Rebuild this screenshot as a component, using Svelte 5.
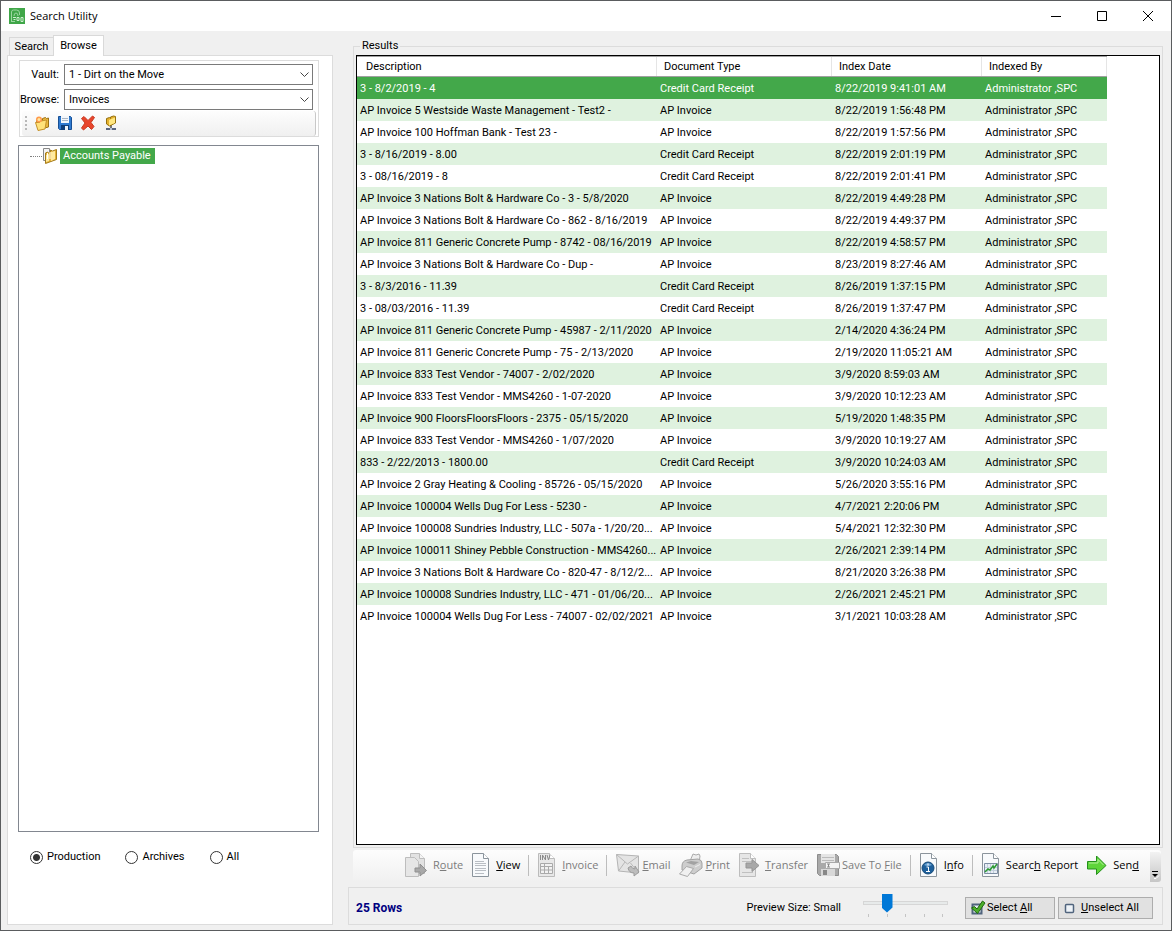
<script>
  const A = 'AP Invoice', C = 'Credit Card Receipt';
  const rows = [
    ['3 - 8/2/2019 - 4', C, '8/22/2019 9:41:01 AM'],
    ['AP Invoice 5 Westside Waste Management - Test2 -', A, '8/22/2019 1:56:48 PM'],
    ['AP Invoice 100 Hoffman Bank - Test 23 -', A, '8/22/2019 1:57:56 PM'],
    ['3 - 8/16/2019 - 8.00', C, '8/22/2019 2:01:19 PM'],
    ['3 - 08/16/2019 - 8', C, '8/22/2019 2:01:41 PM'],
    ['AP Invoice 3 Nations Bolt & Hardware Co - 3 - 5/8/2020', A, '8/22/2019 4:49:28 PM'],
    ['AP Invoice 3 Nations Bolt & Hardware Co - 862 - 8/16/2019', A, '8/22/2019 4:49:37 PM'],
    ['AP Invoice 811 Generic Concrete Pump - 8742 - 08/16/2019', A, '8/22/2019 4:58:57 PM'],
    ['AP Invoice 3 Nations Bolt & Hardware Co - Dup -', A, '8/23/2019 8:27:46 AM'],
    ['3 - 8/3/2016 - 11.39', C, '8/26/2019 1:37:15 PM'],
    ['3 - 08/03/2016 - 11.39', C, '8/26/2019 1:37:47 PM'],
    ['AP Invoice 811 Generic Concrete Pump - 45987 - 2/11/2020', A, '2/14/2020 4:36:24 PM'],
    ['AP Invoice 811 Generic Concrete Pump - 75 - 2/13/2020', A, '2/19/2020 11:05:21 AM'],
    ['AP Invoice 833 Test Vendor - 74007 - 2/02/2020', A, '3/9/2020 8:59:03 AM'],
    ['AP Invoice 833 Test Vendor - MMS4260 - 1-07-2020', A, '3/9/2020 10:12:23 AM'],
    ['AP Invoice 900 FloorsFloorsFloors - 2375 - 05/15/2020', A, '5/19/2020 1:48:35 PM'],
    ['AP Invoice 833 Test Vendor - MMS4260 - 1/07/2020', A, '3/9/2020 10:19:27 AM'],
    ['833 - 2/22/2013 - 1800.00', C, '3/9/2020 10:24:03 AM'],
    ['AP Invoice 2 Gray Heating & Cooling - 85726 - 05/15/2020', A, '5/26/2020 3:55:16 PM'],
    ['AP Invoice 100004 Wells Dug For Less - 5230 -', A, '4/7/2021 2:20:06 PM'],
    ['AP Invoice 100008 Sundries Industry, LLC - 507a - 1/20/20...', A, '5/4/2021 12:32:30 PM'],
    ['AP Invoice 100011 Shiney Pebble Construction - MMS4260...', A, '2/26/2021 2:39:14 PM'],
    ['AP Invoice 3 Nations Bolt & Hardware Co - 820-47 - 8/12/2...', A, '8/21/2020 3:26:38 PM'],
    ['AP Invoice 100008 Sundries Industry, LLC - 471 - 01/06/20...', A, '2/26/2021 2:45:21 PM'],
    ['AP Invoice 100004 Wells Dug For Less - 74007 - 02/02/2021', A, '3/1/2021 10:03:28 AM']
  ];
  let selected = $state(0);
  let scope = $state('Production');
  let preview = $state(1);
</script>

{#snippet page(fill, stroke)}
  <path d="M1.5.5h11l5 5v18h-16z" fill={fill} stroke={stroke} />
  <path d="M12.5.5v5h5" fill="#fff" stroke={stroke} />
{/snippet}

<div class="window">
  <header class="titlebar">
    <svg width="16" height="16" viewBox="0 0 16 16">
      <rect width="16" height="16" fill="#3fa648" />
      <path d="M2.500 14V4q0-2 2-2h3q3 0 3 3v2M5 8q0-3 2-3t2 3M3 13.500h3" fill="none" stroke="#9bd6a0" />
      <path d="M4 9.500h3M4.500 11.500h2M8 9.500h2v3H8zM12 9.500h2v4h-2z" fill="none" stroke="#cdeecf" />
    </svg>
    <h1>Search Utility</h1>
    <div class="winbtns">
      <button aria-label="Minimize"><svg width="10" height="10"><path d="M0 5.500h10" stroke="#000" /></svg></button>
      <button aria-label="Maximize"><svg width="10" height="10"><path d="M.5.5h9v9h-9z" fill="none" stroke="#000" /></svg></button>
      <button aria-label="Close"><svg width="10" height="10"><path d="M0 0l10 10M10 0L0 10" stroke="#000" /></svg></button>
    </div>
  </header>

  <div class="body">
    <aside>
      <div class="tabs" role="tablist">
        <button role="tab" aria-selected="false">Search</button>
        <button role="tab" aria-selected="true" class="on">Browse</button>
      </div>
      <div class="panel">
        <div class="filters">
          <div class="field">
            <label for="vault">Vault:</label>
            <div class="combo">
              <select id="vault"><option>1 - Dirt on the Move</option></select>
              <svg width="9" height="6"><path d="M.5.5l4 4 4-4" fill="none" stroke="#444" /></svg>
            </div>
          </div>
          <div class="field">
            <label for="browse">Browse:</label>
            <div class="combo">
              <select id="browse"><option>Invoices</option></select>
              <svg width="9" height="6"><path d="M.5.5l4 4 4-4" fill="none" stroke="#444" /></svg>
            </div>
          </div>
          <div class="strip">
            <span class="grip"></span>
            <button aria-label="New folder"><svg width="16" height="16" viewBox="0 0 16 16">
              <path d="M2.500 5.500l5-1 1 1V3.500l3-1 1 1 2-.5v9l-10 2.500z" fill="#e9b63c" stroke="#9b7216" />
              <path d="M1.500 7.500h4l1.500-1.500 5.500-1-1.500 9-7 1.500z" fill="#ffe27a" stroke="#c4912a" />
              <circle cx="5" cy="4.500" r="3" fill="#ff9a4a" /><circle cx="5" cy="4.500" r="1.500" fill="#ffe6a0" />
            </svg></button>
            <button aria-label="Save"><svg width="16" height="16" viewBox="0 0 16 16">
              <path d="M1.500 1.500h12l1 1v12h-12l-1-1z" fill="#2f7ad0" stroke="#174f94" />
              <path d="M4 1h8v7H4z" fill="#f3f7fb" /><path d="M5 3.500h6M5 5.500h6" stroke="#a9b6c6" />
              <path d="M4 10h8v5H4z" fill="#103e78" /><path d="M8 11h3v4H8z" fill="#eef3f8" />
            </svg></button>
            <button aria-label="Delete"><svg width="16" height="16" viewBox="0 0 16 16">
              <path d="M1.500 3.500l2.500-2 4 4 4.500-4.500 2 1.500L11 7.500l3 4-2.500 3L8 11l-4.500 4-2-2L5 8z" fill="#e8452c" stroke="#c93a22" />
            </svg></button>
            <button aria-label="Shared folder"><svg width="16" height="16" viewBox="0 0 16 16">
              <path d="M8 10v4" stroke="#777" stroke-width="2" />
              <path d="M3.500 3.500l3-1 1 1V2l3-1 2 .5v6.500l-6 3-3-2z" fill="#e5b12e" stroke="#94700f" />
              <path d="M6 5l6-2.500V8l-6 2.500z" fill="#ffe780" />
              <path d="M3 14h10" stroke="#59657f" stroke-width="2" /><path d="M7 14h2" stroke="#b9c2d6" stroke-width="2" />
            </svg></button>
          </div>
        </div>

        <div class="tree" role="tree">
          <div class="node" role="treeitem" aria-selected="true">
            <span class="dots"></span>
            <svg width="16" height="16" viewBox="0 0 16 16">
              <path d="M1.500.5h6v12h-6z" fill="#f4f4f4" stroke="#888" />
              <path d="M3.500 5l2-1 1 1 2-1v-2l2 1 4-1.500v10l-11 4z" fill="#e6b335" stroke="#a57c1c" />
              <path d="M4 7l3-1v7l-3 1zM9 4l4-1v8l-4 2z" fill="#ffeaa0" /><path d="M5.500 5v6M8 4v7" stroke="#fff" />
            </svg>
            <span class="nodetext">Accounts Payable</span>
          </div>
        </div>

        <div class="radios">
          {#each ['Production', 'Archives', 'All'] as s}
            <label><input type="radio" name="scope" value={s} bind:group={scope} />{s}</label>
          {/each}
        </div>
      </div>
    </aside>

    <main>
      <fieldset>
        <legend>Results</legend>
        <div class="list">
          <table>
            <colgroup><col class="c1" /><col class="c2" /><col class="c3" /><col class="c4" /></colgroup>
            <thead>
              <tr><th>Description</th><th>Document Type</th><th>Index Date</th><th>Indexed By</th></tr>
            </thead>
            <tbody>
              {#each rows as r, i}
                <tr class:sel={selected === i} onclick={() => (selected = i)}>
                  <td>{r[0]}</td><td>{r[1]}</td><td>{r[2]}</td><td>Administrator ,SPC</td>
                </tr>
              {/each}
            </tbody>
          </table>
        </div>
      </fieldset>

      <div class="toolbar">
        <div class="tools">
          <button disabled><svg width="24" height="24" viewBox="0 0 24 24">
            <path d="M6.500.5h9l5 5v15h-14z" fill="#e2e2e2" stroke="#bdbdbd" /><path d="M15.500.5v5h5" fill="#f4f4f4" stroke="#bdbdbd" />
            <path d="M1.500 4.500h9l4 4v15h-13z" fill="#e6e6e6" stroke="#bdbdbd" />
            <path d="M11 15h5v-4l6.500 6.500L16 23v-4h-5z" fill="#a9a9a9" stroke="#8f8f8f" />
          </svg><span>R<u>o</u>ute</span></button>
          <button><svg width="20" height="24" viewBox="0 0 20 24">
            {@render page('#f8fafc', '#8b949c')}
            <path d="M4 8.500h9M4 10.500h11M4 12.500h11M4 15.500h11M4 17.500h11M4 20.500h9" stroke="#b9bec4" />
          </svg><span><u>V</u>iew</span></button>
          <i class="sep"></i>
          <button disabled><svg width="20" height="24" viewBox="0 0 20 24">
            {@render page('#e8e8e8', '#bbb')}
            <path d="M3.500 10.500h12v10h-12zM3.500 13.500h12M3.500 17h12M7.500 10.500v10M11.500 13v7.500" fill="#f2f2f2" stroke="#aaa" />
            <path d="M3.500 2v5M5.500 7V2l3 5V2M10 2l1.500 5L13 2" fill="none" stroke="#8a8a8a" />
          </svg><span><u>I</u>nvoice</span></button>
          <i class="sep"></i>
          <button disabled class="tight"><svg width="25" height="24" viewBox="0 0 25 24">
            <path d="M1.500 1.500l22 1.500v17l-20-2z" fill="#e4e4e4" stroke="#b4b4b4" />
            <path d="M1.500 1.500l11 9.500 11-8M3.500 18l6.500-9M23.500 20l-8-10" fill="none" stroke="#b8b8b8" />
            <path d="M13 15l3-2q1 3 4 3v-3l4 6-5 4v-3q-5 0-6-5z" fill="#bdbdbd" stroke="#9c9c9c" />
          </svg><span><u>E</u>mail</span></button>
          <button disabled class="tight"><svg width="25" height="24" viewBox="0 0 25 24">
            <path d="M12 8l3-7 3 1 3-1 1 2-1 7z" fill="#eee" stroke="#aaa" />
            <path d="M4 13q0-5 5-6l11-1q4 1 4 4v5l-8 6-12-4z" fill="#cdcdcd" stroke="#a2a2a2" />
            <path d="M8 9.500l5-1.500 8 1-5 3z" fill="#a2a2a2" /><path d="M1.500 21l7-7.500 7 2-6 8z" fill="#f0f0f0" stroke="#aaa" />
            <path d="M17 14l5-2.500" stroke="#eee" />
          </svg><span><u>P</u>rint</span></button>
          <button disabled><svg width="22" height="24" viewBox="0 0 22 24">
            {@render page('#e6e6e6', '#bdbdbd')}
            <path d="M4 5.500h7M4 8.500h11M4 19.500h11" stroke="#c0c0c0" />
            <path d="M8 10h6V6.500l7 6-7 6V15H8z" fill="#a8a8a8" stroke="#949494" />
          </svg><span><u>T</u>ransfer</span></button>
          <button disabled class="tight"><svg width="24" height="24" viewBox="0 0 24 24">
            <path d="M1.500 1.500h19l2 2v19h-19l-2-2z" fill="#a9a9a9" stroke="#8d8d8d" />
            <path d="M5 1h14v9H5z" fill="#e5e5e5" /><path d="M6 4.500h12M6 7.500h12" stroke="#bbb" />
            <path d="M5 16h14v7H5z" fill="#d8d8d8" /><path d="M7 17h4v5H7z" fill="#888" />
            <path d="M9.500 9.500h14v6h-14z" fill="#f4f4f4" stroke="#aaa" /><path d="M11 11h3M11 14h3M12.500 11v3" stroke="#888" />
          </svg><span>Save To <u>F</u>ile</span></button>
          <i class="sep"></i>
          <button><svg width="20" height="24" viewBox="0 0 20 24">
            {@render page('#f8fafc', '#8b949c')}
            <circle cx="9" cy="15" r="6" fill="#1d5f9b" stroke="#174a78" /><path d="M5 12q4-4 8 0-4 2-8 0" fill="#6ea6d5" />
            <path d="M9 10.500v2M7.500 14h2v4.500M7 18.500h4" fill="none" stroke="#fff" />
          </svg><span>I<u>n</u>fo</span></button>
          <i class="sep"></i>
          <button><svg width="20" height="24" viewBox="0 0 20 24">
            {@render page('#f8fafc', '#8b949c')}
            <path d="M3.500 10.500h13v10h-13z" fill="#e8eef5" stroke="#7d8ea3" />
            <path d="M6.500 11v9M9.500 11v9M12.500 11v9M4 14.500h12M4 17.500h12" stroke="#c3cfdd" />
            <path d="M4 19l3-3 2 1 3-4 1 2 3-4" fill="none" stroke="#2c9b32" stroke-width="1.500" />
          </svg><span>Searc<u>h</u> Report</span></button>
          <button><svg width="22" height="24" viewBox="0 0 22 24">
            <path d="M1.500 8.500h9V3l9.500 9.500-9.500 9v-5.500h-9z" fill="#5fd53a" stroke="#23901a" /><path d="M3 10h9V6.500l5.500 5.500" fill="none" stroke="#b5f29b" />
          </svg><span>Sen<u>d</u></span></button>
        </div>
        <button class="more" aria-label="Toolbar options"><svg width="11" height="14"><path d="M2 4.500h6" stroke="#000" /><path d="M2 7h6l-3 3z" /><path d="M4 11.500h2l3-3" fill="none" stroke="#fff" /></svg></button>
      </div>

      <footer>
        <strong>25 Rows</strong>
        <label for="size">Preview Size: Small</label>
        <div class="slider">
          <input id="size" type="range" min="0" max="4" bind:value={preview} />
          <div class="ticks"><i></i><i></i><i></i><i></i><i></i></div>
        </div>
        <button class="push"><svg width="16" height="16" viewBox="0 0 16 16">
          <path d="M2.500 4.500h9v9h-9z" fill="#e8eef6" stroke="#50647d" stroke-width="2" />
          <path d="M1.500 8l3-1.500L7 9l5.500-8L15 3 7.500 13.500z" fill="#4cae2b" stroke="#20680f" />
        </svg><span>Select <u>A</u>ll</span></button>
        <button class="push second"><svg width="16" height="16" viewBox="0 0 16 16">
          <rect x="2.500" y="4.500" width="8" height="8" rx="1" fill="#eef3f8" stroke="#50647d" stroke-width="1.500" />
        </svg><span><u>U</u>nselect All</span></button>
      </footer>
    </main>
  </div>
</div>

<style>
  :global(body) { margin: 0; }
  * { box-sizing: border-box; }
  svg { flex: none; display: block; }
  button, select, input { font: inherit; color: inherit; }
  .window {
    min-height: 100vh; display: flex; flex-direction: column;
    border: 1px solid #5a5c5e; background: #f0f0f0; color: #000;
    font: 11px/16px Roboto, "Liberation Sans", sans-serif;
  }
  .titlebar { display: flex; align-items: center; height: 30px; padding-left: 8px; background: #fff; }
  h1 { flex: 1; margin: 0 0 0 5px; font: 11px/16px "Open Sans", sans-serif; }
  .winbtns { display: flex; }
  .winbtns button { width: 46px; height: 30px; display: grid; place-items: center; border: 0; padding: 0; background: none; }
  .body { flex: 1; display: flex; gap: 15px; padding: 4px 8px 5px 6px; }
  aside { width: 326px; display: flex; flex-direction: column; }
  .tabs { display: flex; align-items: flex-end; padding-left: 2px; height: 21px; position: relative; z-index: 1; margin-bottom: -1px; }
  .tabs button { width: 45px; height: 19px; padding: 0; border: 1px solid #d9d9d9; background: #f0f0f0; }
  .tabs .on { width: 51px; height: 21px; border-bottom: 0; background: #fff; margin-left: -1px; }
  .panel { flex: 1; display: flex; flex-direction: column; padding: 4px 13px 59px 10px; border: 1px solid #dcdcdc; background: #fff; }
  .filters { display: flex; flex-direction: column; gap: 4px; border: 1px solid #dcdcdc; padding: 3px 5px 0 0; margin-left: 1px; }
  .field { display: flex; align-items: center; }
  .field label { width: 44px; padding-right: 5px; text-align: right; white-space: nowrap; }
  .combo { position: relative; flex: 1; }
  .combo select { display: block; appearance: none; width: 100%; height: 21px; padding: 0 20px 0 4px; border: 1px solid #7a7a7a; border-radius: 0; background: #fff; }
  .combo svg { position: absolute; right: 4px; top: 8px; pointer-events: none; }
  .strip { display: flex; align-items: center; gap: 7px; height: 25px; margin: -3px -3px 0 2px; padding: 0 0 2px 3px; border-right: 1px solid #c8c8c8; border-radius: 3px; background: linear-gradient(#fdfdfd, #f0f0f0); }
  .strip button { border: 0; padding: 0; background: none; }
  .grip { width: 2px; height: 14px; background: repeating-linear-gradient(#b8b8b8 0 2px, transparent 2px 4px); }
  .tree { flex: 1; margin-top: 8px; padding: 2px 11px; border: 1px solid #828790; }
  .node { display: flex; align-items: center; }
  .dots { width: 12px; border-top: 1px dotted #808080; }
  .nodetext { margin-left: 2px; padding: 0 4px 0 3px; background: #43a84a; color: #fff; }
  .radios { display: flex; gap: 25px; padding: 17px 0 0 12px; }
  .radios label { display: flex; align-items: center; gap: 4px; }
  .radios input { appearance: none; width: 13px; height: 13px; margin: 0; border: 1px solid #333; border-radius: 50%; background: #fff; }
  .radios input:checked { background: radial-gradient(#333 0 3px, #fff 4px); }
  main { flex: 1; min-width: 0; display: flex; flex-direction: column; }
  fieldset { flex: 1; display: flex; flex-direction: column; margin: 3px 0 0 5px; padding: 1px 2px 2px; border: 1px solid #dcdcdc; min-width: 0; }
  legend { margin-left: 4px; padding: 0 2px; height: 16px; }
  .list { flex: 1; border: 1px solid #000; background: #fff; overflow: hidden; }
  table { width: 750px; table-layout: fixed; border-collapse: separate; border-spacing: 0; }
  .c1 { width: 300px; } .c2 { width: 175px; } .c3 { width: 150px; } .c4 { width: 125px; }
  th { height: 21px; padding: 0 7px; text-align: left; font-weight: 400; border: solid #a0a0a0; border-width: 1px 0; background: linear-gradient(#e5e5e5, #e5e5e5) right / 1px 100% no-repeat; }
  th:first-child { padding-left: 9px; }
  td { height: 22px; padding: 2px 0 0 3px; white-space: nowrap; overflow: hidden; }
  tbody tr:nth-child(even) { background: #dff2df; }
  tbody tr.sel { background: #43a84a; color: #fff; }
  .toolbar { display: flex; align-items: center; height: 32px; margin: 2px 2px 0 5px; border-radius: 3px; background: linear-gradient(#fdfdfd, #f0f0f0); font-family: "Open Sans", sans-serif; }
  .tools { flex: 1; display: flex; justify-content: flex-end; align-items: center; gap: 8px; padding: 0 11px 2px 0; }
  .tools button { display: flex; align-items: center; gap: 5px; border: 0; padding: 0; background: none; white-space: nowrap; }
  .tools .tight { gap: 2px; }
  .tools button:disabled { color: #7c7c7c; }
  .sep { width: 1px; height: 21px; background: #bdbdbd; }
  .more { align-self: flex-end; width: 11px; height: 30px; padding: 14px 0 0; border: 0; border-radius: 0 3px 3px 0; background: linear-gradient(#f2f2f2, #c6c6c6); }
  footer { display: flex; align-items: center; height: 38px; margin-top: 5px; padding: 3px 9px 0 7px; border: 1px solid #dcdcdc; }
  strong { flex: 1; color: #000080; font-size: 12px; }
  .slider { width: 85px; margin: 0 17px 5px 22px; }
  .slider input { appearance: none; display: block; width: 100%; height: 19px; margin: 0; background: linear-gradient(#e7eaea, #e7eaea) center / 83px 2px no-repeat, linear-gradient(#d6d6d6, #d6d6d6) center / 100% 4px no-repeat; }
  .slider input::-webkit-slider-thumb { appearance: none; width: 11px; height: 19px; background: #0078d7; clip-path: polygon(0 0, 100% 0, 100% 74%, 50% 100%, 0 74%); }
  .ticks { display: flex; justify-content: space-between; padding: 1px 5px 0; }
  .ticks i { width: 1px; height: 3px; background: #c4c4c4; }
  .push { display: flex; align-items: center; gap: 1px; width: 90px; height: 22px; padding: 0 4px; border: 1px solid #adadad; background: #e1e1e1; white-space: nowrap; }
  .second { width: 95px; margin-left: 3px; gap: 2px; }
</style>
